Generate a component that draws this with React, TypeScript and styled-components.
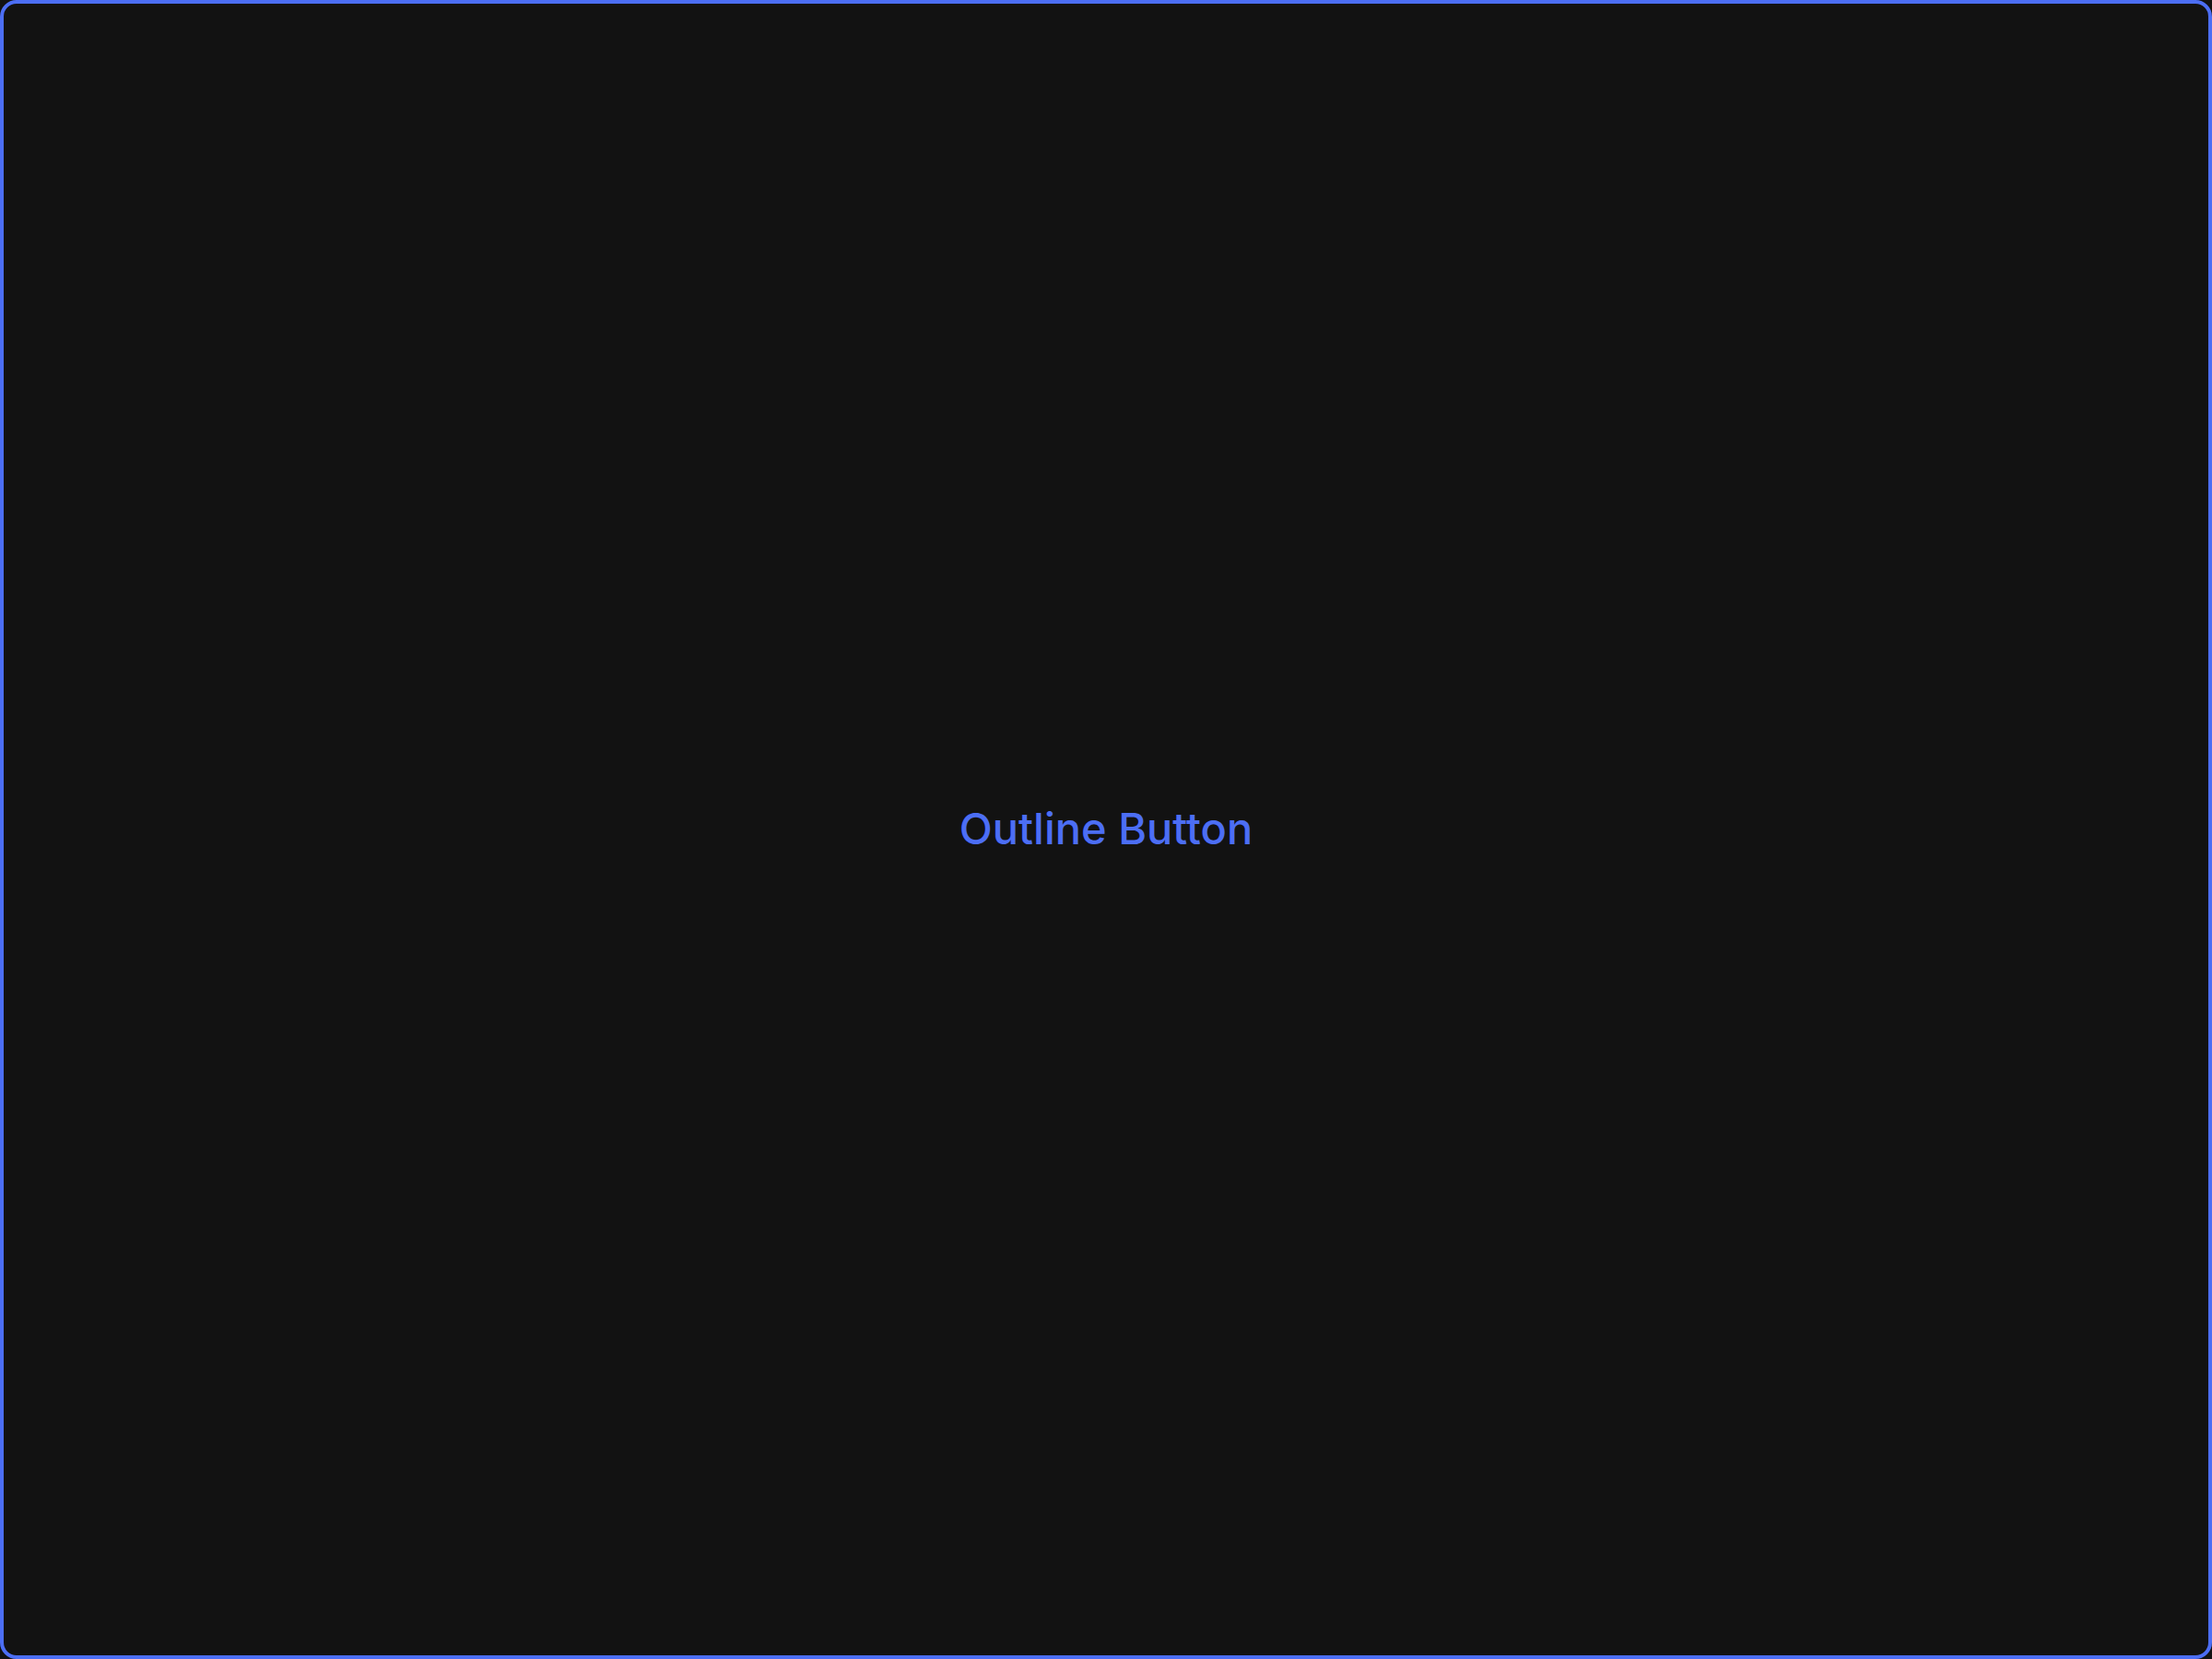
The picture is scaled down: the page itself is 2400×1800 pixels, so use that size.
import React from "react";
import styled, { createGlobalStyle } from "styled-components";

const Global = createGlobalStyle`
  html, body { margin: 0; padding: 0; background: #121212; overflow: hidden; }
  * { box-sizing: border-box; }
`;

const OutlineButton = styled.button`
  display: flex;
  align-items: center;
  justify-content: center;
  width: 2400px;
  height: 1800px;
  margin: 0;
  padding: 0 0 4px 0;
  background: #121212;
  border: 4px solid #4c6ef5;
  border-radius: 18px;
  color: #4c6ef5;
  font-family: Inter, "Noto Sans", sans-serif;
  font-weight: 500;
  font-size: 47px;
  cursor: pointer;
`;

export default function App() {
  return (
    <>
      <Global />
      <OutlineButton>Outline Button</OutlineButton>
    </>
  );
}
